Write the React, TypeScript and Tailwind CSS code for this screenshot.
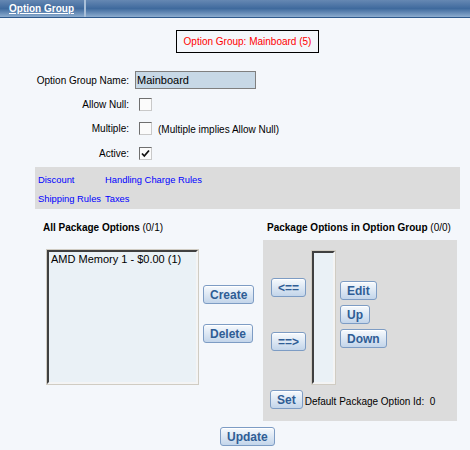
import React from "react";

const btn =
  "h-[19px] rounded-[3px] border border-[#7d9cc4] bg-gradient-to-b from-[#f7fafd] to-[#c3d5ea] px-[6px] text-[12px] font-bold leading-none text-[#2f5d95] shadow-[inset_0_1px_0_#fff]";

function Checkbox({ checked }: { checked?: boolean }) {
  return (
    <div className="ml-[4px] flex h-[13px] w-[13px] items-center justify-center border border-t-[#6f6f6f] border-l-[#6f6f6f] border-r-[#c9c9c9] border-b-[#c9c9c9] bg-[#fbfbfb]">
      {checked && (
        <svg width="9" height="9" viewBox="0 0 9 9">
          <path d="M1 4.5 L3.3 7 L8 1.5" fill="none" stroke="#111" strokeWidth="1.8" />
        </svg>
      )}
    </div>
  );
}

function ListBox({ w, h, children }: { w: string; h: string; children?: React.ReactNode }) {
  return (
    <div className={`${w} ${h} border border-[#d0ccc3]`}>
      <div className="h-full w-full border-2 border-t-[#404040] border-l-[#404040] border-r-[#f4f4f4] border-b-[#f4f4f4] bg-[#eaf1f6] px-[2px] text-[11px] leading-[14px] text-black">
        {children}
      </div>
    </div>
  );
}

function FormRow({ label, children }: { label: string; children: React.ReactNode }) {
  return (
    <div className="flex h-[24px] items-center">
      <div className="w-[129px] text-right">{label}</div>
      <div className="flex items-center pl-[6px]">{children}</div>
    </div>
  );
}

export default function App() {
  return (
    <div className="h-[450px] w-[470px] overflow-hidden bg-[#f4f7fb] font-[Liberation_Sans,Arial,sans-serif] text-[10px] text-black">
      {/* Title bar */}
      <div className="flex h-[18px] items-stretch border-b border-[#2f5a8c] bg-gradient-to-b from-[#6688b3] via-[#3f6a9d] to-[#8dadcf]">
        <div className="flex items-center border-r-2 border-[#a9bfd8] pl-[9px] pr-[10px] text-[10px] font-bold text-white underline">
          Option Group
        </div>
      </div>

      {/* Heading box */}
      <div className="ml-[176px] mt-[12px] flex h-[23px] w-[143px] items-center justify-center border border-black text-[10px] text-[#ff0000]">
        Option Group: Mainboard (5)
      </div>

      {/* Form */}
      <div className="mt-[15px] flex flex-col">
        <FormRow label="Option Group Name:">
          <div className="flex h-[18px] w-[121px] items-center border border-[#7f7f7f] bg-[#c7d8e6] px-[1px] text-[11px]">
            Mainboard
          </div>
        </FormRow>
        <FormRow label="Allow Null:">
          <Checkbox />
        </FormRow>
        <FormRow label="Multiple:">
          <Checkbox />
          <span className="ml-[6px] pt-[3px] text-[10px]">(Multiple implies Allow Null)</span>
        </FormRow>
        <div className="h-[1px]" />
        <FormRow label="Active:">
          <Checkbox checked />
        </FormRow>
      </div>

      {/* Links box */}
      <div className="ml-[35px] mt-[2px] grid h-[42px] w-[425px] grid-cols-[67px_auto] content-start bg-[#dcdcdc] py-[3px] pl-[3px] text-[9.4px] leading-[19px] text-[#0000ff]">
        <span>Discount</span>
        <span>Handling Charge Rules</span>
        <span className="whitespace-nowrap">Shipping Rules</span>
        <span>Taxes</span>
      </div>

      {/* Column headings */}
      <div className="mt-[10px] flex h-[16px] items-center">
        <div className="w-[267px] pl-[43px]">
          <span className="font-bold">All Package Options</span> (0/1)
        </div>
        <div className="whitespace-nowrap">
          <span className="font-bold">Package Options in Option Group</span> (0/0)
        </div>
      </div>

      {/* Lists */}
      <div className="mt-[5px] flex items-start">
        <div className="flex w-[263px] items-start">
          <div className="ml-[46px] mt-[9px]">
            <ListBox w="w-[153px]" h="h-[136px]">
              AMD Memory 1 - $0.00 (1)
            </ListBox>
          </div>
          <div className="ml-[4px] flex flex-col items-start">
            <button className={`${btn} mt-[45px]`}>Create</button>
            <button className={`${btn} mt-[20px]`}>Delete</button>
          </div>
        </div>

        <div className="flex h-[181px] w-[194px] flex-col bg-[#dcdcdc]">
          <div className="flex items-start">
            <div className="ml-[8px] flex flex-col">
              <button className={`${btn} mt-[38px] w-[35px] px-0`}>&lt;==</button>
              <button className={`${btn} mt-[35px] w-[35px] px-0`}>==&gt;</button>
            </div>
            <div className="ml-[5px] mt-[10px]">
              <ListBox w="w-[25px]" h="h-[135px]" />
            </div>
            <div className="ml-[4px] flex flex-col items-start gap-[5px] pt-[41px]">
              <button className={btn}>Edit</button>
              <button className={btn}>Up</button>
              <button className={btn}>Down</button>
            </div>
          </div>
          <div className="ml-[7px] mt-[5px] flex items-center">
            <button className={btn}>Set</button>
            <span className="ml-[2px] pt-[4px] whitespace-pre">Default Package Option Id:  0</span>
          </div>
        </div>
      </div>

      <div className="ml-[220px] mt-[6px]">
        <button className={btn}>Update</button>
      </div>
    </div>
  );
}
